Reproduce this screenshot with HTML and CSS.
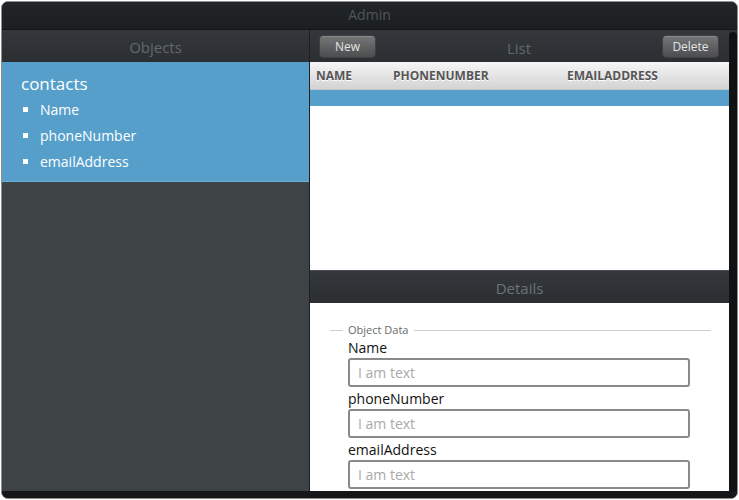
FILE: index.html
```html
<!DOCTYPE html>
<html>
<head>
<meta charset="utf-8">
<link rel="stylesheet" href="styles.css">
</head>
<body>
<div class="window">
  <div class="titlebar">Admin</div>
  <div class="main">
    <div class="left">
      <div class="phead"><span class="ptitle">Objects</span></div>
      <div class="tree">
        <div class="tree-root">contacts</div>
        <ul class="tree-list">
          <li>Name</li>
          <li>phoneNumber</li>
          <li>emailAddress</li>
        </ul>
      </div>
      <div class="left-fill"></div>
    </div>
    <div class="right">
      <div class="phead phead-grid">
        <button class="btn btn-left">New</button>
        <span class="ptitle">List</span>
        <button class="btn btn-right">Delete</button>
      </div>
      <div class="thead">
        <span class="col c1">NAME</span>
        <span class="col c2">PHONENUMBER</span>
        <span class="col c3">EMAILADDRESS</span>
      </div>
      <div class="row-sel"></div>
      <div class="tbody"></div>
      <div class="dhead"><span class="ptitle">Details</span></div>
      <div class="dbody">
        <div class="legend"><span class="lline short"></span><span class="ltext">Object Data</span><span class="lline long"></span></div>
        <div class="fields">
          <label class="flabel">Name</label>
          <div class="finput">I am text</div>
          <label class="flabel">phoneNumber</label>
          <div class="finput">I am text</div>
          <label class="flabel">emailAddress</label>
          <div class="finput">I am text</div>
        </div>
      </div>
    </div>
    <div class="scrollcol"><div class="scrollbar"></div></div>
  </div>
  <div class="bottombar"></div>
</div>
</body>
</html>
```

FILE: styles.css
```css
* { box-sizing: border-box; }
html, body { margin: 0; padding: 0; background: #ffffff; }
body {
  width: 739px;
  height: 500px;
  padding: 1px 1px 1px 1px;
  font-family: "Open Sans", "DejaVu Sans", sans-serif;
  overflow: hidden;
}
.window {
  width: 737px;
  height: 498px;
  border: 1px solid #8c9092;
  border-radius: 7px;
  background: #1e2123;
  display: flex;
  flex-direction: column;
  overflow: hidden;
}
.titlebar {
  height: 28px;
  flex: none;
  background: linear-gradient(#222527, #1c1f21);
  border-bottom: 1px solid #131517;
  color: #50565a;
  font-size: 14px;
  line-height: 25px;
  text-align: center;
}
.main {
  flex: 1;
  display: flex;
  min-height: 0;
}
.left {
  width: 308px;
  flex: none;
  display: flex;
  flex-direction: column;
  border-right: 1px solid #1d2023;
}
.phead {
  height: 32px;
  flex: none;
  background: linear-gradient(#34383c, #2b2f32);
  text-align: center;
  line-height: 34px;
}
.ptitle {
  color: #62686c;
  font-size: 15px;
}
.tree {
  background: #569fcb;
  height: 120px;
  padding: 12px 0 0 19px;
  border-bottom: 1px solid #6cb1db;
  color: #ffffff;
}
.tree-root {
  font-size: 17px;
  line-height: 20px;
}
.tree-list {
  list-style: none;
  margin: 2px 0 0 0;
  padding: 0;
}
.tree-list li {
  display: flex;
  align-items: center;
  height: 26px;
  font-size: 14px;
}
.tree-list li::before {
  content: "";
  width: 5px;
  height: 5px;
  background: #ffffff;
  margin: 0 12px 0 2px;
}
.left-fill {
  flex: 1;
  background: #3e4346;
}
.right {
  width: 419px;
  flex: none;
  display: flex;
  flex-direction: column;
  background: #ffffff;
}
.phead-grid {
  display: grid;
  grid-template-columns: 1fr auto 1fr;
  align-items: center;
  padding: 1px 10px 0 9px;
}
.btn {
  width: 57px;
  height: 23px;
  border: 1px solid #3d3f41;
  border-radius: 4px;
  background: linear-gradient(#747678, #4b4d4f);
  color: #e4e4e4;
  font-family: "Open Sans", "DejaVu Sans", sans-serif;
  font-size: 12px;
  line-height: 20px;
  padding: 0;
  box-shadow: inset 0 1px 0 rgba(255,255,255,0.15);
}
.btn-left { justify-self: start; }
.btn-right { justify-self: end; }
.phead-grid .ptitle { line-height: 20px; padding-top: 3px; }
.thead {
  height: 28px;
  flex: none;
  background: linear-gradient(#f6f6f6, #d3d3d3);
  border-bottom: 1px solid #c4c4c4;
  display: flex;
  align-items: center;
  padding-left: 6px;
  font-size: 12px;
  font-weight: bold;
  color: #565656;
  text-shadow: 0 1px 0 #ffffff;
}
.c1 { width: 77px; }
.c2 { width: 174px; }
.row-sel {
  height: 16px;
  flex: none;
  background: #569fcb;
}
.tbody {
  height: 164px;
  flex: none;
  background: #ffffff;
}
.dhead {
  height: 33px;
  flex: none;
  background: linear-gradient(#34383c, #2b2f32);
  border-top: 1px solid #4a4f53;
  text-align: center;
  line-height: 35px;
}
.dhead .ptitle { color: #6b7277; }
.dbody {
  flex: 1;
  background: #ffffff;
  padding: 20px 18px 0 20px;
}
.legend {
  display: flex;
  align-items: center;
  height: 14px;
}
.lline {
  height: 1px;
  background: #cfcfcf;
}
.lline.short { width: 13px; }
.lline.long { flex: 1; }
.ltext {
  font-size: 11px;
  color: #6a6a6a;
  padding: 0 6px 0 5px;
  line-height: 14px;
}
.fields {
  padding-left: 18px;
  display: flex;
  flex-direction: column;
  width: 360px;
}
.flabel {
  font-size: 14px;
  line-height: 21px;
  color: #111111;
}
.finput {
  width: 342px;
  height: 29px;
  border: 2px solid #8a8a8a;
  border-radius: 3px;
  padding-left: 8px;
  font-size: 14px;
  line-height: 26px;
  color: #a9a9a9;
  margin-bottom: 1px;
}
.scrollcol {
  flex: 1;
  background: #2f3337;
  padding-top: 2px;
}
.scrollbar {
  height: 100%;
  border-radius: 4px 4px 0 0;
  background: #101112;
}
.bottombar {
  height: 7px;
  flex: none;
  background: #141617;
}
```
